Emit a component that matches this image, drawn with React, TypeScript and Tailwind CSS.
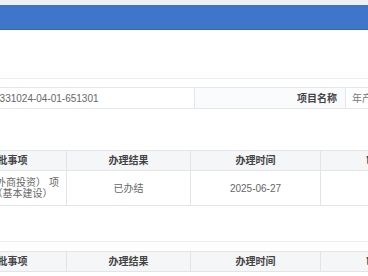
import React from "react";

const font = { fontFamily: '"Liberation Sans", "Noto Sans CJK SC", sans-serif' };

function HeaderRow() {
  return (
    <div className="flex h-[21px] bg-[#f5f6f8] border-y border-[#e2e4e8] text-[10px] text-[#444] font-semibold whitespace-nowrap">
      <div className="w-[118px] shrink-0 flex items-center justify-center border-r border-[#e2e4e8]">审批事项</div>
      <div className="w-[124px] shrink-0 flex items-center justify-center border-r border-[#e2e4e8]">办理结果</div>
      <div className="w-[130px] shrink-0 flex items-center justify-center border-r border-[#e2e4e8]">办理时间</div>
      <div className="w-[130px] shrink-0 flex items-center justify-center">审批部门</div>
    </div>
  );
}

export default function App() {
  return (
    <div className="w-[368px] h-[276px] overflow-hidden bg-white" style={font}>
      <div className="h-[5px] bg-[#eef0f3]" />
      <div className="h-[25px] bg-[#3f76c9] border-b border-[#3668b4]" />
      <div className="h-[48px]" />
      <div className="border-t border-[#ececee]">
        <div className="h-[8px]" />
        <div className="flex h-[22px] border-y border-[#e4e6ea] text-[10px] ml-[-26px] w-[480px] whitespace-nowrap">
          <div className="w-[221px] shrink-0 flex items-center text-[#666] border-r border-[#e4e6ea]">
            2506-331024-04-01-651301
          </div>
          <div className="w-[151px] shrink-0 flex items-center justify-end pr-[8px] text-[#444] font-semibold bg-[#fafbfc] border-r border-[#e4e6ea]">
            项目名称
          </div>
          <div className="flex-1 flex items-center pl-[6px] text-[#777]">年产5万吨新型建材项目</div>
        </div>
      </div>
      <div className="h-[41px]" />
      <div className="ml-[-51px] w-[502px]">
        <HeaderRow />
        <div className="flex h-[35px] border-b border-[#e2e4e8] text-[10px] text-[#666] whitespace-nowrap">
          <div className="w-[118px] shrink-0 flex items-center justify-center text-center leading-[11px] border-r border-[#e2e4e8]">
            备案（含外商投资） 项
            <br />
            目备案（基本建设）
          </div>
          <div className="w-[124px] shrink-0 flex items-center justify-center border-r border-[#e2e4e8]">已办结</div>
          <div className="w-[130px] shrink-0 flex items-center justify-center border-r border-[#e2e4e8]">2025-06-27</div>
          <div className="w-[130px] shrink-0 flex items-center justify-center">发改局</div>
        </div>
      </div>
      <div className="h-[35px]" />
      <div className="border-t border-[#ececee]">
        <div className="h-[9px]" />
        <div className="ml-[-51px] w-[502px]">
          <HeaderRow />
        </div>
      </div>
    </div>
  );
}
